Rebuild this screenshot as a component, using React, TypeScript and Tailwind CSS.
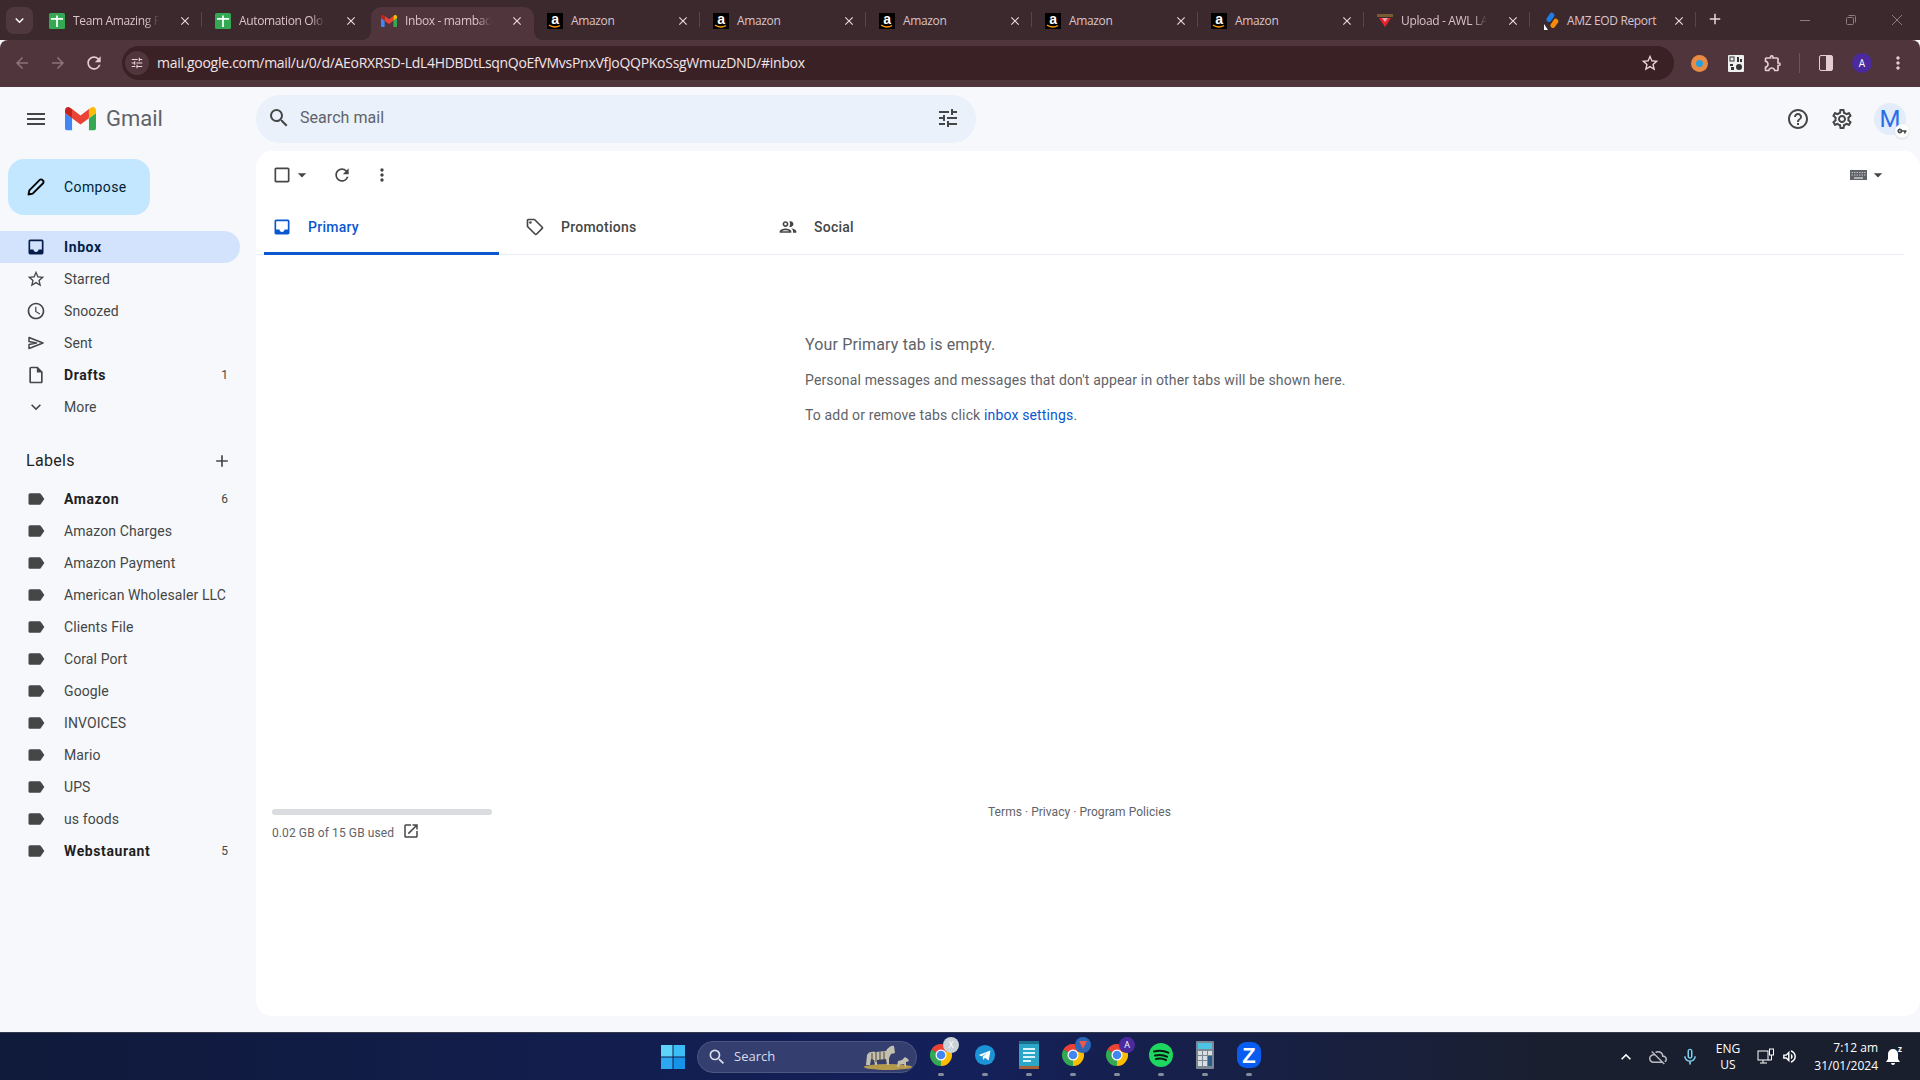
import {
  MdAdd, MdArrowBack, MdArrowDropDown, MdArrowForward, MdCheckBoxOutlineBlank, MdClose, MdExpandMore,
  MdHelpOutline, MdInbox, MdKeyboardArrowUp, MdLabel, MdMenu, MdMicNone, MdMoreVert,
  MdOpenInNew, MdOutlineAccessTime, MdOutlineExtension, MdOutlineInsertDriveFile, MdOutlineLocalOffer,
  MdOutlinePeople, MdOutlineSettings, MdOutlineVolumeUp, MdRefresh, MdSearch, MdStarBorder,
  MdTune, MdVpnKey, MdCloudOff, MdOutlineTune,
} from "react-icons/md"
import { ReactNode } from "react"

function SheetsIcon() {
  return (
    <svg width="16" height="16" viewBox="0 0 16 16" className="shrink-0">
      <rect width="16" height="16" rx="1.5" fill="#34a853" />
      <path d="M2 5.800h12M8 2.500v11.500" stroke="#fff" strokeWidth="1.700" />
    </svg>
  )
}

function GmailLogo({ size = 16 }: { size?: number }) {
  return (
    <svg width={size} height={(size * 66) / 88} viewBox="52 42 88 66" className="shrink-0">
      <path fill="#4285f4" d="M58 108h14V74L52 59v43c0 3.32 2.69 6 6 6" />
      <path fill="#34a853" d="M120 108h14c3.32 0 6-2.69 6-6V59l-20 15" />
      <path fill="#fbbc04" d="M120 48v26l20-15v-8c0-7.42-8.47-11.65-14.4-7.2" />
      <path fill="#ea4335" d="M72 74V48l24 18 24-18v26L96 92" />
      <path fill="#c5221f" d="M52 51v8l20 15V48l-5.6-4.2c-5.94-4.45-14.4-.22-14.4 7.2" />
    </svg>
  )
}

function AmazonIcon() {
  return (
    <span className="relative flex h-4 w-4 shrink-0 justify-center bg-black font-['Liberation_Sans',sans-serif] text-[14px] leading-[13px] font-bold text-white">
      a
      <svg width="14" height="5" viewBox="0 0 14 5" className="absolute bottom-0 left-[1px]">
        <path d="M1 1c3 2.6 8 2.6 11 .4" stroke="#f90" strokeWidth="1.3" fill="none" />
      </svg>
    </span>
  )
}

function UploadIcon() {
  return (
    <svg width="16" height="16" viewBox="0 0 16 16" className="shrink-0">
      <rect x="0" y="1" width="16" height="3" fill="#7a5a30" />
      <path d="M2 5h12l-6 9z" fill="#e8222e" />
      <path d="M5 5h6L8 9z" fill="#f8a0a0" />
    </svg>
  )
}

function EodIcon() {
  return (
    <svg width="16" height="18" viewBox="0 0 16 18" className="shrink-0">
      <rect x="5" y="0" width="5" height="10" rx="2.5" transform="rotate(35 7 5)" fill="#1f7de6" />
      <rect x="9" y="6" width="5" height="10" rx="2.5" transform="rotate(35 11 11)" fill="#f58a0b" />
      <path d="M1 12l4 6H1z" fill="#fff" />
    </svg>
  )
}

const tabs: { title: string; icon: ReactNode; fade?: boolean; active?: boolean }[] = [
  { title: "Team Amazing PR", icon: <SheetsIcon />, fade: true },
  { title: "Automation Olo C", icon: <SheetsIcon />, fade: true },
  { title: "Inbox - mambade", icon: <GmailLogo />, fade: true, active: true },
  { title: "Amazon", icon: <AmazonIcon /> },
  { title: "Amazon", icon: <AmazonIcon /> },
  { title: "Amazon", icon: <AmazonIcon /> },
  { title: "Amazon", icon: <AmazonIcon /> },
  { title: "Amazon", icon: <AmazonIcon /> },
  { title: "Upload - AWL LAE", icon: <UploadIcon />, fade: true },
  { title: "AMZ EOD Report", icon: <EodIcon /> },
]

function TabStrip() {
  return (
    <div className="flex h-10 shrink-0 items-end bg-[#3b292d] font-['Open_Sans',sans-serif] text-[12px] tracking-[-0.35px] text-[#dcc3c9]">
      <div className="mb-[6px] ml-[6px] flex h-[27px] w-[27px] items-center justify-center self-center rounded-lg bg-[#50393e] mt-[6px]">
        <MdExpandMore size={17} className="text-white" />
      </div>
      <div className="ml-[3px] flex">
        {tabs.map((tab, i) => (
          <div key={i} className="relative flex h-[33px] w-[166px] items-center pb-[6px] pl-[13px] pr-[10px]">
            {tab.active && (
              <>
                <div className="absolute inset-y-0 left-[3px] right-0 rounded-t-[10px] bg-[#50363c]" />
                <div className="absolute bottom-0 left-[-5px] h-2 w-2 bg-[radial-gradient(circle_at_0_0,transparent_7.5px,#50363c_8px)]" />
                <div className="absolute bottom-0 right-[-8px] h-2 w-2 bg-[radial-gradient(circle_at_100%_0,transparent_7.5px,#50363c_8px)]" />
              </>
            )}
            {!tab.active && i !== 1 && (
              <div className="absolute right-0 top-[5px] h-[15px] w-px bg-[#5b4449]" />
            )}
            <div className="relative flex w-full items-center gap-2">
              {tab.icon}
              <span
                className={
                  tab.fade
                    ? "mr-[11px] min-w-0 flex-1 overflow-hidden whitespace-nowrap [mask-image:linear-gradient(to_right,black_84%,transparent)]"
                    : "mr-[11px] min-w-0 flex-1 whitespace-nowrap"
                }
              >
                {tab.title}
              </span>
              <MdClose size={14} className="shrink-0 text-[#ecd6db]" />
            </div>
          </div>
        ))}
      </div>
      <MdAdd size={18} className="mb-[12px] ml-[10px] text-[#ecd6db]" />
      <div className="mb-[15px] ml-auto flex items-center">
        <span className="mr-[36px] h-px w-[10px] bg-[#8f7a7f]" />
        <svg width="10" height="10" viewBox="0 0 10 10" className="mr-[36px]" fill="none" stroke="#8f7a7f">
          <rect x="0.5" y="2.5" width="7" height="7" rx="1" />
          <path d="M2.5.5h6a1 1 0 0 1 1 1v6" />
        </svg>
        <svg width="10" height="10" viewBox="0 0 10 10" className="mr-[18px]" stroke="#8f7a7f">
          <path d="M0 0l10 10M10 0L0 10" />
        </svg>
      </div>
    </div>
  )
}

function AddressBar() {
  return (
    <div className="flex h-[47px] shrink-0 items-start rounded-t-lg bg-[#50363c] pt-[6px] text-[#dcc3c9]">
      <div className="flex h-[34px] w-[122px] items-center">
        <MdArrowBack size={18} className="ml-[13px] text-[#8d747a]" />
        <MdArrowForward size={18} className="ml-[18px] text-[#8d747a]" />
        <MdRefresh size={20} className="ml-[17px] text-[#e5ced3]" />
      </div>
      <div className="flex h-[34px] w-[1552px] items-center rounded-full bg-[#3a2126] pr-[14px]">
        <div className="ml-[3px] flex h-[24px] w-[24px] items-center justify-center rounded-full bg-[#50363c]">
          <MdOutlineTune size={14} className="text-[#ecd6db]" />
        </div>
        <span className="mb-px ml-[8px] font-['Open_Sans',sans-serif] text-[14px] tracking-[-0.29px] text-[#f3e4e7]">
          mail.google.com/mail/u/0/d/AEoRXRSD-LdL4HDBDtLsqnQoEfVMvsPnxVfJoQQPKoSsgWmuzDND/#inbox
        </span>
        <MdStarBorder size={20} className="ml-auto text-[#ecd6db]" />
      </div>
      <div className="flex h-[34px] items-center">
        <span className="ml-[17px] flex h-[17px] w-[17px] items-center justify-center rounded-full bg-[#e98a45]">
          <span className="h-[7px] w-[7px] rounded-full bg-[#25a0e0]" />
        </span>
        <svg width="16" height="17" viewBox="0 0 16 17" className="ml-[20px]">
          <rect width="16" height="17" rx="1" fill="#eee" />
          <rect x="2" y="2" width="4" height="4" fill="none" stroke="#333" />
          <rect x="9" y="2" width="2" height="5" fill="#333" />
          <rect x="12" y="4" width="2" height="3" fill="#333" />
          <rect x="2" y="9" width="3" height="2" fill="#333" />
          <rect x="3" y="12" width="3" height="3" fill="#333" />
          <circle cx="11" cy="12" r="3" fill="#333" />
        </svg>
        <MdOutlineExtension size={20} className="ml-[19px] text-[#e5ced3]" />
        <span className="ml-[16px] h-[20px] w-px bg-[#6d5258]" />
        <span className="ml-[19px] flex h-[16px] w-[14px] rounded-[2px] border-[1.5px] border-[#e5ced3]">
          <span className="ml-auto h-full w-[6px] bg-[#e5ced3]" />
        </span>
        <span className="ml-[19px] flex h-5 w-5 items-center justify-center rounded-full bg-[#4a2a9c] font-['Open_Sans',sans-serif] text-[10px] text-white">
          A
        </span>
        <MdMoreVert size={20} className="ml-[16px] text-[#e5ced3]" />
      </div>
    </div>
  )
}

function GmailHeader() {
  return (
    <div className="flex h-16 shrink-0 items-center">
      <div className="flex w-[256px] items-center">
        <MdMenu size={24} className="ml-6 text-[#444746]" />
        <div className="ml-[17px]">
          <GmailLogo size={31} />
        </div>
        <span className="ml-[10px] text-[22px] leading-none text-[#5f6368]">Gmail</span>
      </div>
      <div className="flex h-12 w-[720px] items-center rounded-full bg-[#eaf1fb] pb-[2px] pl-[11px] pr-[16px]">
        <MdSearch size={24} className="text-[#444746]" />
        <span className="ml-[9px] text-[16px] tracking-[0.05px] text-[#5f6368]">Search mail</span>
        <MdTune size={24} className="ml-auto text-[#444746]" />
      </div>
      <div className="ml-auto flex items-center pr-[14px]">
        <MdHelpOutline size={24} className="text-[#444746]" />
        <MdOutlineSettings size={24} className="ml-5 text-[#444746]" />
        <div className="relative ml-5 flex h-8 w-8 items-center justify-center rounded-full bg-[#e3ecfb] text-[24px] leading-none text-[#2a6fe8]">
          M
          <span className="absolute bottom-[-3px] right-[-3px] flex h-[14px] w-[14px] items-center justify-center rounded-full bg-white shadow-sm">
            <MdVpnKey size={10} className="text-[#444746]" />
          </span>
        </div>
      </div>
    </div>
  )
}

function SentIcon() {
  return (
    <svg width="20" height="20" viewBox="0 0 20 20" fill="none" stroke="#444746" strokeWidth="1.500">
      <path d="M3 4.500L17 10 3 15.500v-4l7.500-1.500L3 8.500z" strokeLinejoin="round" />
    </svg>
  )
}

const navItems = [
  { name: "Inbox", icon: <MdInbox size={20} />, active: true },
  { name: "Starred", icon: <MdStarBorder size={20} /> },
  { name: "Snoozed", icon: <MdOutlineAccessTime size={20} /> },
  { name: "Sent", icon: <SentIcon /> },
  { name: "Drafts", icon: <MdOutlineInsertDriveFile size={20} />, bold: true, count: "1" },
  { name: "More", icon: <MdExpandMore size={20} /> },
]

const labels = [
  { name: "Amazon", bold: true, count: "6" },
  { name: "Amazon Charges" },
  { name: "Amazon Payment" },
  { name: "American Wholesaler LLC" },
  { name: "Clients File" },
  { name: "Coral Port" },
  { name: "Google" },
  { name: "INVOICES" },
  { name: "Mario" },
  { name: "UPS" },
  { name: "us foods" },
  { name: "Webstaurant", bold: true, count: "5" },
]

function SideRow({ name, icon, active, bold, count }: { name: string; icon: ReactNode; active?: boolean; bold?: boolean; count?: string }) {
  let rowColor = "tracking-[0.1px] text-[#444746]"
  if (bold) rowColor = "font-bold tracking-[0.6px] text-[#1f1f1f]"
  if (active) rowColor = "rounded-r-full bg-[#d3e3fd] font-bold tracking-[0.6px] text-[#041e49]"
  return (
    <div className={`flex h-8 w-[240px] items-center pl-[26px] pr-3 text-[14px] ${rowColor}`}>
      <span className={active ? "w-[38px] shrink-0 text-[#041e49]" : "w-[38px] shrink-0 text-[#444746]"}>{icon}</span>
      <span className="whitespace-nowrap">{name}</span>
      {count && <span className="ml-auto text-[12px] font-normal tracking-normal text-[#444746]">{count}</span>}
    </div>
  )
}

function Sidebar() {
  return (
    <div className="w-[256px] shrink-0">
      <div className="ml-2 flex h-14 w-[142px] items-center rounded-2xl bg-[#c2e7ff] text-[14px] tracking-[0.4px] text-[#001d35]">
        <svg width="20" height="20" viewBox="0 0 24 24" className="ml-[18px]" fill="none" stroke="#000" strokeWidth="2.2">
          <path d="M3 21l1-5L16.5 3.5a2.1 2.1 0 0 1 3 0l1 1a2.1 2.1 0 0 1 0 3L8 20z" strokeLinejoin="round" />
        </svg>
        <span className="ml-[18px]">Compose</span>
      </div>
      <div className="mt-4">
        {navItems.map((item) => (
          <SideRow key={item.name} {...item} />
        ))}
      </div>
      <div className="mt-[22px] flex h-8 w-[240px] items-center justify-between pl-[26px] pr-[8px] text-[16px] tracking-[0.3px] text-[#1f1f1f]">
        <span>Labels</span>
        <MdAdd size={20} className="text-[#444746]" />
      </div>
      <div className="mt-[6px]">
        {labels.map((label) => (
          <SideRow key={label.name} {...label} icon={<MdLabel size={20} />} />
        ))}
      </div>
    </div>
  )
}

function KeyboardIcon() {
  return (
    <svg width="17" height="10" viewBox="0 0 17 10" className="mr-px">
      <rect width="17" height="10" fill="#5f6368" />
      <path d="M1.500 2.500h14M1.500 5h14" stroke="#c4c7c5" strokeWidth="1.200" strokeDasharray="1.500 1" />
      <path d="M4 8h9" stroke="#e8e8e8" strokeWidth="1.200" />
    </svg>
  )
}

function InboxPanel() {
  return (
    <div className="mb-4 flex-1 rounded-2xl bg-white">
      <div className="flex h-12 items-center pl-4 pr-8 text-[#444746]">
        <MdCheckBoxOutlineBlank size={20} />
        <MdArrowDropDown size={20} />
        <MdRefresh size={20} className="ml-5" />
        <MdMoreVert size={20} className="ml-5" />
        <span className="ml-auto"><KeyboardIcon /></span>
        <MdArrowDropDown size={20} />
      </div>
      <div className="mr-4 flex h-14 border-b border-[#e9eef6] pl-2 text-[14px] font-medium tracking-[0.25px]">
        <div className="flex h-14 w-[235px] items-center gap-4 border-b-[3px] border-[#0b57d0] pl-2 pt-[3px] text-[#0b57d0]">
          <MdInbox size={20} />
          Primary
        </div>
        <div className="ml-[18px] flex h-14 w-[235px] items-center gap-4 pl-2 text-[#444746]">
          <MdOutlineLocalOffer size={20} />
          Promotions
        </div>
        <div className="ml-[18px] flex h-14 w-[235px] items-center gap-4 pl-2 text-[#444746]">
          <MdOutlinePeople size={20} />
          Social
        </div>
      </div>
      <div className="pl-[549px] pt-[78px] tracking-[0.15px] text-[#5f6368]">
        <p className="text-[16px] leading-6">Your Primary tab is empty.</p>
        <p className="mt-[13px] text-[14px] leading-5">Personal messages and messages that don&apos;t appear in other tabs will be shown here.</p>
        <p className="mt-[15px] text-[14px] leading-5">
          To add or remove tabs click <span className="text-[#0b57d0]">inbox settings</span>.
        </p>
      </div>
      <div className="mt-[379px] flex pl-4 text-[12px] leading-4 text-[#5f6368]">
        <div className="w-[220px] pt-[5px]">
          <div className="h-[6px] rounded-full bg-[#dadce0]" />
          <div className="mt-[10px] flex items-center whitespace-nowrap tracking-[0.1px]">
            0.02 GB of 15 GB used
            <MdOpenInNew size={18} className="ml-2 -mt-1 text-[#444746]" />
          </div>
        </div>
        <div className="ml-[496px] tracking-[0.04px]">Terms · Privacy · Program Policies</div>
      </div>
    </div>
  )
}

function ChromeLogo({ badge }: { badge?: ReactNode }) {
  return (
    <span className="relative block h-[24px] w-[24px]">
      <svg width="24" height="24" viewBox="0 0 24 24">
        <path d="M12 12L2.47 6.5A11 11 0 0 1 21.53 6.5Z" fill="#ea4335" />
        <path d="M12 12L21.53 6.5A11 11 0 0 1 12 23Z" fill="#fbbc04" />
        <path d="M12 12L12 23A11 11 0 0 1 2.47 6.5Z" fill="#34a853" />
        <circle cx="12" cy="12" r="5.5" fill="#fff" />
        <circle cx="12" cy="12" r="4.3" fill="#4285f4" />
      </svg>
      {badge}
    </span>
  )
}

const badgeCls = "absolute -right-[6px] -top-[6px] flex h-[16px] w-[16px] items-center justify-center rounded-full text-[9px] text-white"

const dockIcons: ReactNode[] = [
  <ChromeLogo badge={<span className={`${badgeCls} bg-[#c9d2d8] text-[#6b5a3a]`}>X</span>} />,
  <svg width="22" height="24" viewBox="0 0 24 24">
    <circle cx="12" cy="12" r="11" fill="#1c93d6" />
    <path d="M5 12l13-5-2 11-4-3-2 2.5-.5-3.8L16 9l-7.5 4.3z" fill="#fff" />
  </svg>,
  <svg width="20" height="28" viewBox="0 0 20 28">
    <rect y="1" width="20" height="25" fill="#2ba6c9" />
    <rect y="0" width="20" height="3" fill="#1c6f8a" />
    <rect y="25" width="20" height="3" fill="#a5623a" />
    <path d="M4 8h12M4 12h12M4 16h12M4 20h8" stroke="#d8f4fb" strokeWidth="2" />
  </svg>,
  <ChromeLogo badge={<span className={`${badgeCls} bg-[#2b67b8]`}><span className="h-0 w-0 border-x-[4px] border-t-[8px] border-x-transparent border-t-[#f0554a]" /></span>} />,
  <ChromeLogo badge={<span className={`${badgeCls} bg-[#4a2a9c]`}>A</span>} />,
  <svg width="24" height="24" viewBox="0 0 24 24">
    <circle cx="12" cy="12" r="12" fill="#1ed760" />
    <path d="M5 8.5c5-1.3 10-.9 14.3 1.2M6 12.5c4-1 8.5-.7 12 1.2M7 16c3.500-.7 7-.5 10 1" stroke="#0b1a10" strokeWidth="2" strokeLinecap="round" fill="none" />
  </svg>,
  <svg width="18" height="28" viewBox="0 0 18 28">
    <rect width="18" height="28" rx="1" fill="#7b8791" />
    <rect x="2" y="2" width="14" height="6" fill="#4cc4e6" />
    <path d="M2 10h4v4H2zM7 10h4v4H7zM12 10h4v4h-4zM2 15h4v4H2zM7 15h4v4H7zM2 20h4v5H2zM7 20h4v5H7z" fill="#d9dee2" />
    <rect x="12" y="15" width="4" height="10" fill="#2b5c8a" />
  </svg>,
  <span className="flex h-[26px] w-[24px] items-center justify-center rounded-[9px] bg-[#0a5cf0] font-['Liberation_Sans',sans-serif] text-[22px] font-bold text-white">Z</span>,
]

function Taskbar() {
  return (
    <div className="flex h-12 shrink-0 items-center border-t border-[#353a4c] bg-[linear-gradient(90deg,#101a3a,#14205a_50%,#1a1f30_80%,#1a1f2e)] pl-[661px] font-['Open_Sans',sans-serif] text-white">
      <svg width="24" height="24" viewBox="0 0 24 24" className="shrink-0">
        <path d="M0 0h11.500v11.500H0z" fill="#5fd4fb" />
        <path d="M12.500 0H24v11.500H12.500z" fill="#3bbdf6" />
        <path d="M0 12.500h11.500V24H0z" fill="#2aa8f0" />
        <path d="M12.500 12.500H24V24H12.500z" fill="#1693e8" />
      </svg>
      <div className="ml-[12px] flex h-8 w-[220px] items-center rounded-full border border-[#4c5680] bg-[#343f70] pl-[9px] text-[13px] text-[#d8dcea]">
        <MdSearch size={20} />
        <span className="ml-[7px]">Search</span>
        <svg width="50" height="28" viewBox="0 0 50 28" className="ml-auto mr-[2px]">
          <ellipse cx="24" cy="24" rx="24" ry="3" fill="#b59a4c" />
          <path d="M2 22l1-10c1-3 5-4 9-3l10-1c2-4 6-6 8-5l1 7-4 1-2 4v7h-2l-1-6-9 1v5h-2l-1-5-3-1-1 6z" fill="#c4c0b0" />
          <path d="M8 10v9M12 9v10M16 9v9M20 9v9" stroke="#4a4438" strokeWidth="1" />
          <path d="M33 24l1-6 4-1 3-3 3 2 1 2-3 1v5h-1l-1-3-4 .5-1 2.500z" fill="#c4c0b0" />
        </svg>
      </div>
      <div className="ml-[2px] flex">
        {dockIcons.map((icon, i) => (
          <div key={i} className="relative flex h-[46px] w-[44px] items-center justify-center pb-[3px]">
            {icon}
            <span className="absolute bottom-[4px] h-[3px] w-[6px] rounded-full bg-[#868c9c]" />
          </div>
        ))}
      </div>
      <div className="ml-auto flex items-center pr-[19px] text-[12px] leading-4">
        <div className="flex w-[32px] justify-center"><MdKeyboardArrowUp size={20} /></div>
        <div className="flex w-[32px] justify-center"><MdCloudOff size={18} className="text-[#bcbcc4]" /></div>
        <div className="flex w-[32px] justify-center"><MdMicNone size={20} className="text-[#7fd0ee]" /></div>
        <div className="w-[44px] text-center">
          <div>ENG</div>
          <div>US</div>
        </div>
        <svg width="18" height="18" viewBox="0 0 18 18" className="ml-[7px]" fill="none" stroke="#fff">
          <rect x="1" y="3" width="10" height="9" />
          <path d="M3 15h7M6 12v3" />
          <rect x="12.500" y="1" width="4" height="6" />
          <path d="M14.500 7v5H11" />
        </svg>
        <MdOutlineVolumeUp size={17} className="ml-[6px]" />
        <div className="ml-[9px] w-[71px] text-right leading-[18px]">
          <div>7:12 am</div>
          <div>31/01/2024</div>
        </div>
        <span className="relative ml-[7px] block h-[18px] w-[16px]">
          <svg width="16" height="18" viewBox="0 0 16 18" fill="#fff">
            <path d="M8 1a5 5 0 0 1 5 5v5l2 3H1l2-3V6a5 5 0 0 1 5-5zM6 15h4a2 2 0 0 1-4 0z" />
          </svg>
          <span className="absolute -right-[1px] -top-[3px] text-[8px] leading-none font-bold">z</span>
        </span>
      </div>
    </div>
  )
}

export default function App() {
  return (
    <div className="flex h-[1080px] w-[1920px] flex-col overflow-hidden bg-[#f6f8fc] font-['Roboto',sans-serif]">
      <TabStrip />
      <AddressBar />
      <div className="flex min-h-0 flex-1 flex-col">
        <GmailHeader />
        <div className="flex min-h-0 flex-1">
          <div className="pt-2">
            <Sidebar />
          </div>
          <InboxPanel />
        </div>
      </div>
      <Taskbar />
    </div>
  )
}
